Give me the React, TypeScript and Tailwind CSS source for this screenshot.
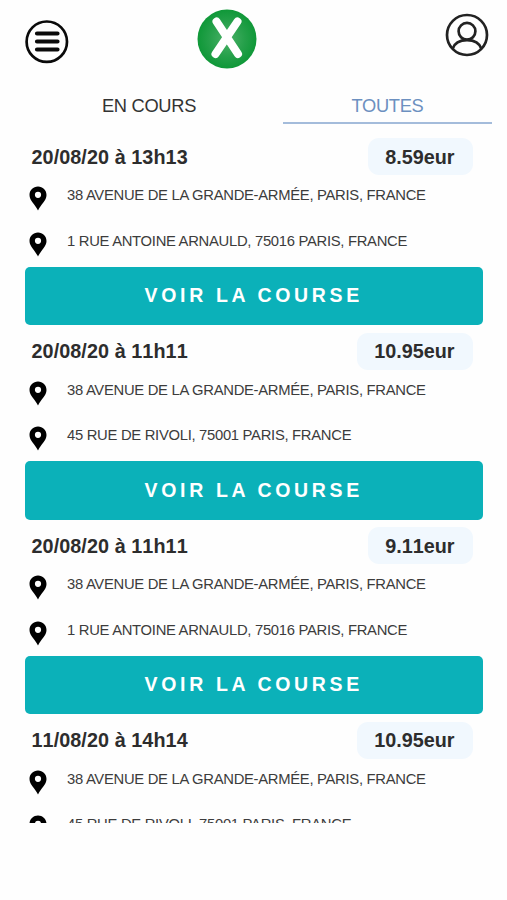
type Ride = {
    date: string;
    price: string;
    from: string;
    to: string;
};

const rides: Ride[] = [
    {
        date: "20/08/20 à 13h13",
        price: "8.59eur",
        from: "38 AVENUE DE LA GRANDE-ARMÉE, PARIS, FRANCE",
        to: "1 RUE ANTOINE ARNAULD, 75016 PARIS, FRANCE",
    },
    {
        date: "20/08/20 à 11h11",
        price: "10.95eur",
        from: "38 AVENUE DE LA GRANDE-ARMÉE, PARIS, FRANCE",
        to: "45 RUE DE RIVOLI, 75001 PARIS, FRANCE",
    },
    {
        date: "20/08/20 à 11h11",
        price: "9.11eur",
        from: "38 AVENUE DE LA GRANDE-ARMÉE, PARIS, FRANCE",
        to: "1 RUE ANTOINE ARNAULD, 75016 PARIS, FRANCE",
    },
    {
        date: "11/08/20 à 14h14",
        price: "10.95eur",
        from: "38 AVENUE DE LA GRANDE-ARMÉE, PARIS, FRANCE",
        to: "45 RUE DE RIVOLI, 75001 PARIS, FRANCE",
    },
];

const MenuIcon = () => (
    <svg width="44" height="44" viewBox="0 0 44 44" fill="none" stroke="#0a0a0a">
        <circle cx="21.8" cy="21.7" r="20.2" strokeWidth="2.7" />
        <path
            d="M12 13.5h20.5M12 21.5h20.5M12 29.5h20.5"
            strokeWidth="4.2"
            strokeLinecap="round"
        />
    </svg>
);

const Logo = () => (
    <svg width="60" height="60" viewBox="0 0 60 60" fill="none">
        <defs>
            <radialGradient id="logo-green">
                <stop offset="0" stopColor="#4cb269" />
                <stop offset="0.6" stopColor="#25a04a" />
                <stop offset="1" stopColor="#0f9838" />
            </radialGradient>
        </defs>
        <circle cx="30" cy="30" r="29.5" fill="url(#logo-green)" />
        <path
            d="M19.5 12.5L41 45M40.5 12.5L18.5 45"
            stroke="#fff"
            strokeWidth="8"
            strokeLinecap="round"
        />
    </svg>
);

const UserIcon = () => (
    <svg
        width="44"
        height="44"
        viewBox="0 0 44 44"
        fill="none"
        stroke="#222"
        strokeWidth="2.7"
    >
        <circle cx="22" cy="22" r="20" />
        <circle cx="22" cy="18.3" r="8.4" />
        <path d="M7.5 36C9.5 30 15 27.2 22 27.2S34.5 30 36.5 36" />
    </svg>
);

const PinIcon = () => (
    <svg width="18" height="25" viewBox="0 0 18 25" className="shrink-0">
        <path
            fillRule="evenodd"
            fill="#000"
            d="M9 .5C4.2.5.5 4.2.5 8.9.5 14.5 6 18 9 24.500 12 18 17.500 14.500 17.500 8.900 17.500 4.200 13.800.500 9 .500ZM9 5.700a3.100 3.100 0 1 1 0 6.200 3.100 3.100 0 0 1 0-6.200Z"
        />
    </svg>
);

const Address = ({ children }: { children: string }) => (
    <div className="flex h-[45.6px] items-start gap-[20.5px] pl-[3.5px]">
        <div className="pt-[4px]">
            <PinIcon />
        </div>
        <p className="pt-[3px] text-[14.8px] leading-[20px] tracking-[-0.29px] whitespace-nowrap text-[#3c3c3c]">
            {children}
        </p>
    </div>
);

const RideItem = ({ ride }: { ride: Ride }) => (
    <li className="h-[194.5px]">
        <div className="flex h-[37px] items-center justify-between pr-[10px] pl-[6.5px] text-[19.8px] font-bold text-[#2d2d2d] [font-kerning:none]">
            <h2 className="pt-[2px] tracking-[0.07px]">{ride.date}</h2>
            <span className="flex h-[37px] items-center rounded-[11px] bg-[#f1f8fe] pt-[2px] pr-[18px] pl-[17px]">
                {ride.price}
            </span>
        </div>
        <div className="h-[91.5px] pt-[7px]">
            <Address>{ride.from}</Address>
            <Address>{ride.to}</Address>
        </div>
        <button className="flex h-[58.5px] w-full items-center justify-center rounded-[5px] bg-[#0bb1b9] text-[19.5px] font-bold tracking-[3.65px] text-white">
            VOIR LA COURSE
        </button>
    </li>
);

const App = () => {
    return (
        <div className="h-[900px] w-[507px] overflow-hidden bg-[#fefefe] font-['Liberation_Sans',Arial,sans-serif]">
            <header className="flex h-[87px] items-start pr-[18px] pl-[25px]">
                <div className="pt-[20px]">
                    <MenuIcon />
                </div>
                <div className="ml-[128px] pt-[8.5px]">
                    <Logo />
                </div>
                <div className="ml-auto pt-[13px]">
                    <UserIcon />
                </div>
            </header>

            <nav className="flex h-[37px] gap-[29px] pr-[15px] pl-[44px] text-[18.3px] tracking-[-0.3px]">
                <button className="w-[210px] border-b-2 border-transparent pt-[3px] text-[#333]">
                    EN COURS
                </button>
                <button className="w-[209px] border-b-2 border-[#a4bcdb] pt-[3px] text-[#6c90c0]">
                    TOUTES
                </button>
            </nav>

            <ul className="h-[699px] overflow-hidden pt-[14px] pr-[24.5px] pl-[25px]">
                {rides.map((ride, index) => (
                    <RideItem key={index} ride={ride} />
                ))}
            </ul>
        </div>
    );
};

export default App;
